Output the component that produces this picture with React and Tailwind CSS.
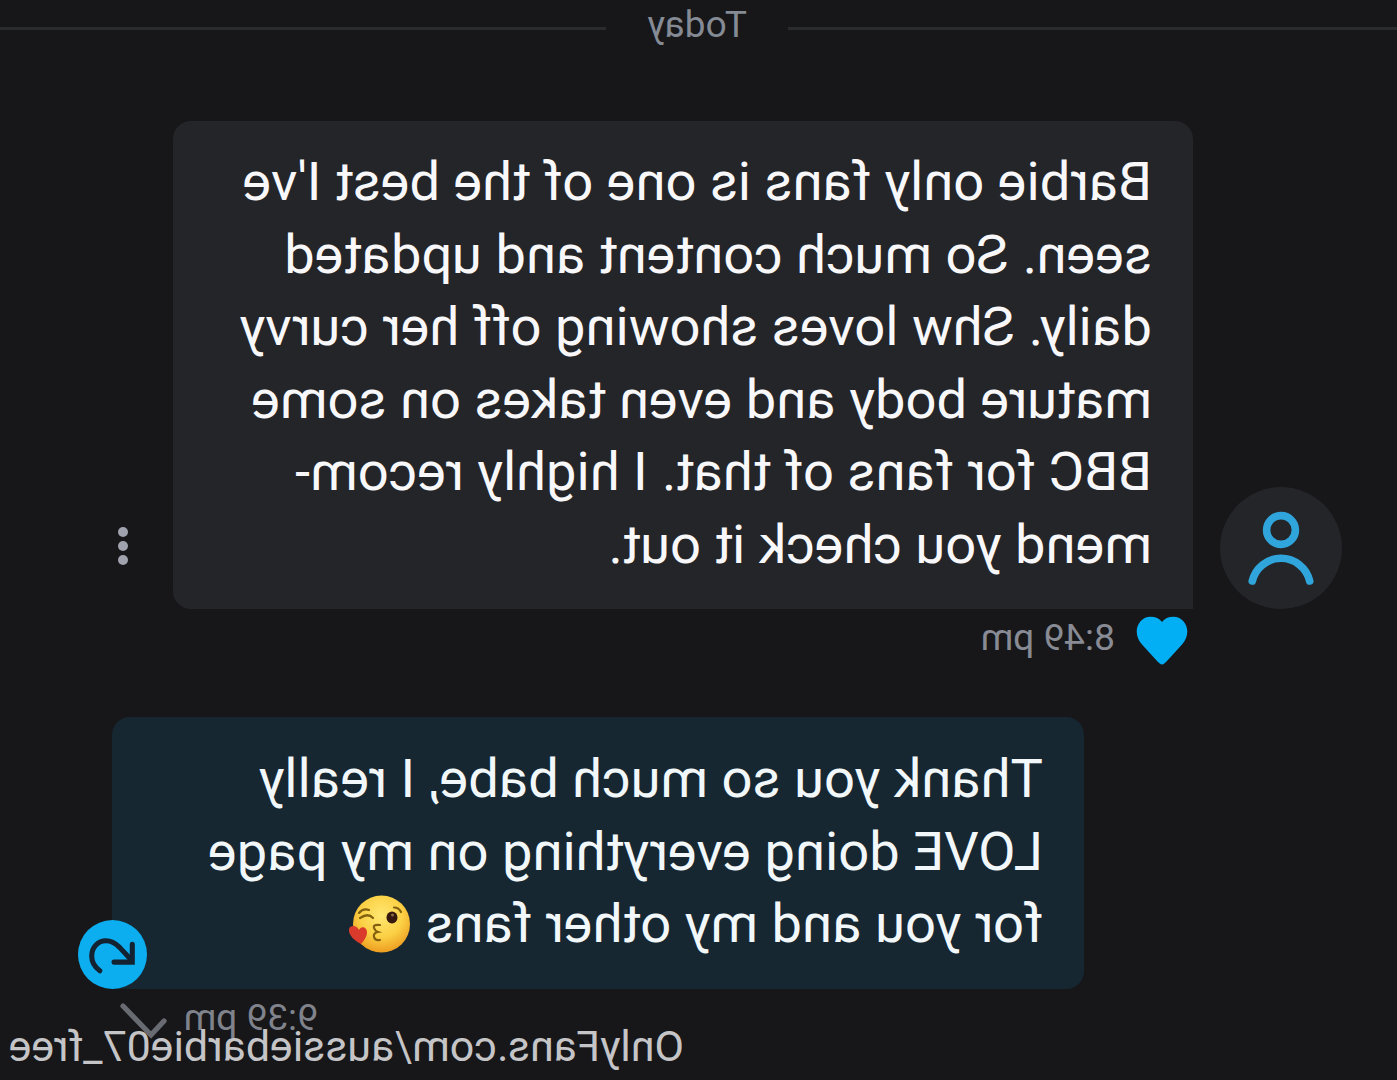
import React from 'react'

const REVIEW = [
  "Barbie only fans is one of the best I've",
  'seen. So much content and updated',
  'daily. Shw loves showing off her curvy',
  'mature body and even takes on some',
  'BBC for fans of that. I highly recom-',
  'mend you check it out.',
]

function KissEmoji() {
  return (
    <svg viewBox="0 0 62 60" className="ml-[16px] h-[60px] w-[62px] shrink-0">
      <defs>
        <radialGradient id="face" cx="50%" cy="35%" r="68%">
          <stop offset="0" stopColor="#ffe872" />
          <stop offset="0.55" stopColor="#fbd045" />
          <stop offset="1" stopColor="#ec981c" />
        </radialGradient>
      </defs>
      <circle cx="28.5" cy="30" r="28.5" fill="url(#face)" />
      <ellipse cx="18" cy="23.5" rx="5.5" ry="6" fill="#35190d" />
      <circle cx="17.5" cy="21" r="1.5" fill="#8c6a4c" />
      <g fill="none" stroke="#83600f" strokeWidth="2.2" strokeLinecap="round">
        <path d="M9 18 Q11 13.5 16 13.5" />
        <path d="M37 24 Q42 18.5 50 24" />
        <path d="M41 16 Q47 14 51 19" />
        <path d="M30 31 Q37 30 36 34 Q35 37 32 38 Q37 39 36 43 Q35 47 30 46" />
      </g>
      <path d="M49 50 C45 46 41 39 44 35 C46 32 50 33 51 36 C53 31 60 31 61 35 C62 41 55 47 49 50Z" fill="#d93a2c" />
    </svg>
  )
}

function Divider() {
  return (
    <div className="flex h-[56px] items-start">
      <div className="mt-[27px] h-[3px] w-[609px] bg-[#2a2b2e]" />
      <div className="w-[182px] pl-[41px] pt-[4px] text-[37px] leading-[42px] text-[#858b95]">Today</div>
      <div className="mt-[27px] h-[3px] flex-1 bg-[#2a2b2e]" />
    </div>
  )
}

export default function App() {
  return (
    <div className="h-[1080px] w-[1397px] -scale-x-100 overflow-hidden whitespace-nowrap bg-[#17171a] font-['Roboto',sans-serif]">
      <Divider />

      {/* Received message */}
      <div className="mt-[65px] flex h-[488px] items-end pl-[55px]">
        <div className="flex size-[122px] items-center justify-center rounded-full bg-[#242529]">
          <svg viewBox="0 0 66 74" className="h-[74px] w-[66px]" fill="none" stroke="#30a5dc" strokeWidth="7.6" strokeLinecap="round">
            <circle cx="33" cy="19" r="14.4" />
            <path d="M4.3 70 A29.5 29.5 0 0 1 61.7 70" />
          </svg>
        </div>
        <div className="ml-[27px] h-[488px] w-[1020px] rounded-[18px] rounded-bl-none bg-[#242529] pl-[41px] pt-[25px] text-[54.3px] leading-[72.6px] text-[#f8f8fa]">
          {REVIEW.map((line) => (
            <div key={line}>{line}</div>
          ))}
        </div>
        <div className="mb-[44px] ml-[45px] flex flex-col gap-[4px]">
          <span className="size-[10px] rounded-full bg-[#a0a3ad]" />
          <span className="size-[10px] rounded-full bg-[#a0a3ad]" />
          <span className="size-[10px] rounded-full bg-[#a0a3ad]" />
        </div>
      </div>
      <div className="flex h-[108px] items-start pl-[209px] pt-[7px]">
        <svg viewBox="0 0 52 49" className="h-[49px] w-[52px]">
          <path d="M26 48.5C24.500 48.5 23 47 21.500 45.500L6 28.500C2.500 24.500 0.700 20 0.700 15.500C0.700 7 7 0.700 14.500 0.700C19.500 0.700 23.500 2.500 26 6C28.500 2.500 32.500 0.700 37.500 0.700C45 0.700 51.300 7 51.300 15.500C51.300 20 49.500 24.500 46 28.500L30.500 45.500C29 47 27.500 48.5 26 48.5Z" fill="#03aff4" />
        </svg>
        <span className="ml-[21px] text-[37.2px] leading-[42px] text-[#888b94]">8:49 pm</span>
      </div>

      {/* Sent message */}
      <div className="relative ml-[313px] h-[272px] w-[972px] rounded-[18px] rounded-br-none bg-[#172732] pl-[41px] pt-[26px] text-[54.3px] leading-[72.6px] text-[#f2f7fa]">
        <div>Thank you so much babe, I really</div>
        <div>LOVE doing everything on my page</div>
        <div className="flex items-center">
          <span>for you and my other fans</span>
          <KissEmoji />
        </div>
        <svg viewBox="0 0 68 68" className="absolute -right-[34px] bottom-0 size-[69px]">
          <circle cx="34" cy="34" r="34" fill="#0caef0" />
          <g fill="none" stroke="#132331" strokeWidth="5" strokeLinecap="round">
            <path d="M46.5 50 C52 46 54.5 41 54.5 35.5 C54.5 26.5 48 20.5 40.5 20.5 C34.5 20.5 30.5 23.5 27 27 L15.5 39.5" />
            <path d="M14.5 24 V41.5 H32.5" />
          </g>
        </svg>
      </div>
      <div className="flex h-[91px] items-start pl-[1079px] pt-[7px]">
        <span className="text-[37.2px] leading-[42px] text-[#80838b]">9:39 pm</span>
        <svg viewBox="0 0 50 36" className="ml-[15px] mt-[7px] h-[36px] w-[50px]" fill="none" stroke="#696b72" strokeWidth="5.2" strokeLinecap="round">
          <path d="M5 18 L18 32 L46 3" />
        </svg>
      </div>

      {/* Watermark */}
      <div className="absolute left-[713px] top-[1022px] text-[42.9px] leading-[48px] text-[#c5c5c7]">
        OnlyFans.com/aussiebarbie07_free
      </div>
    </div>
  )
}
